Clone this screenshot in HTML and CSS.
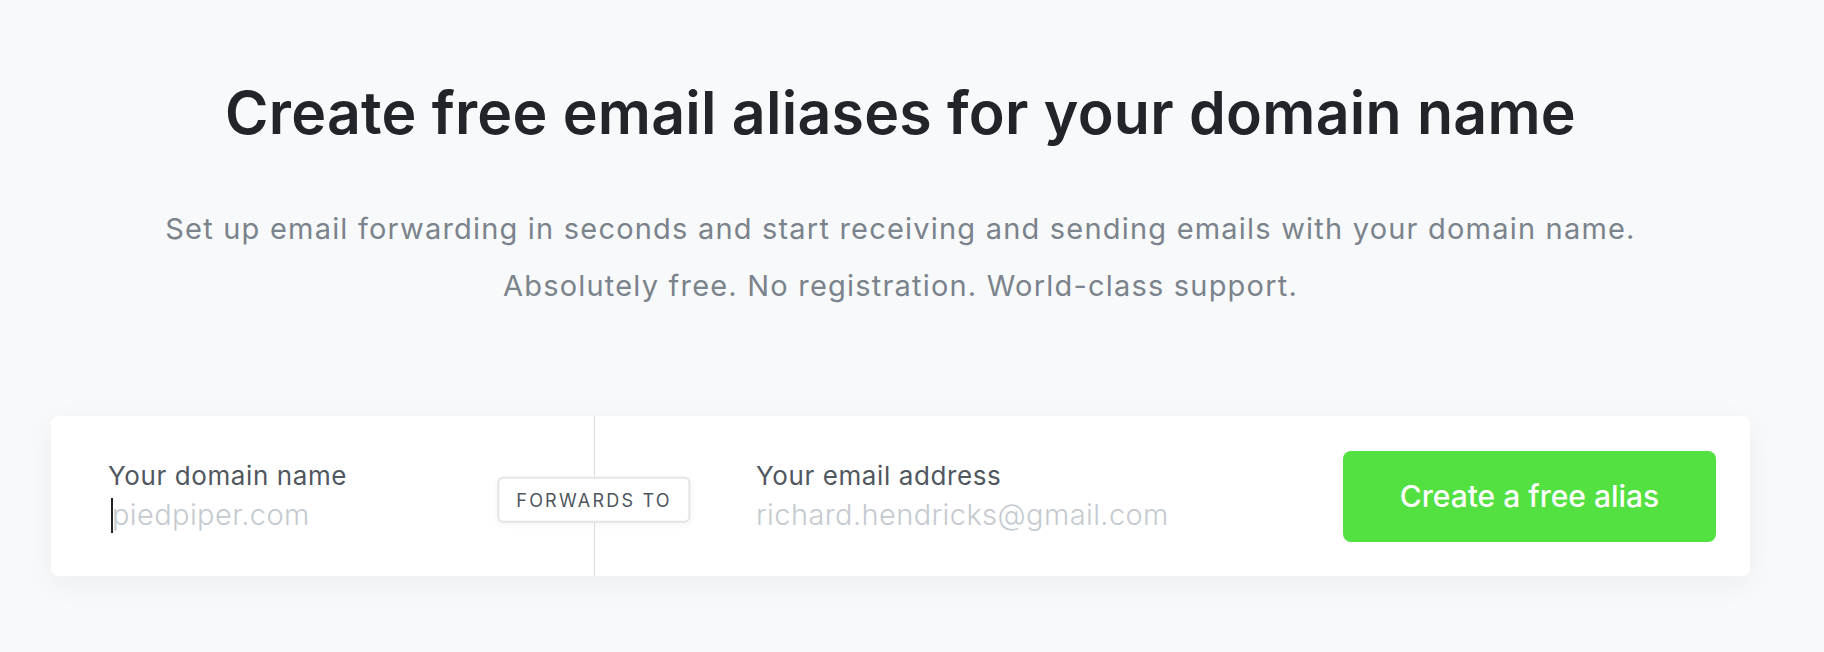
FILE: index.html
```html
<!DOCTYPE html>
<html lang="en">
<head>
    <meta charset="UTF-8">
    <meta name="viewport" content="width=device-width, initial-scale=1.0">
    <title>Free email aliases</title>
    <link rel="stylesheet" href="styles.css">
</head>
<body>
    <main class="hero">
        <!-- Title -->
        <h1 class="hero-title">Create free email aliases for your domain name</h1>
        <p class="hero-text">
            Set up email forwarding in seconds and start receiving and sending emails with your domain name.<br>
            Absolutely free. No registration. World-class support.
        </p>

        <!-- Alias form -->
        <form class="alias-form" onsubmit="return false">
            <div class="field field-domain">
                <label class="field-label" for="domain">Your domain name</label>
                <div class="field-input-wrap">
                    <span class="caret"></span>
                    <input id="domain" class="field-input" type="text" placeholder="piedpiper.com">
                </div>
                <span class="forwards-badge">FORWARDS TO</span>
            </div>
            <div class="field field-email">
                <label class="field-label" for="email">Your email address</label>
                <div class="field-input-wrap">
                    <input id="email" class="field-input" type="email" placeholder="richard.hendricks@gmail.com">
                </div>
            </div>
            <div class="form-action">
                <button class="alias-button" type="submit">Create a free alias</button>
            </div>
        </form>
    </main>
</body>
</html>
```

FILE: styles.css
```css
/* Reset */
* {
    margin: 0;
    padding: 0;
    box-sizing: border-box;
}

body {
    font-family: Inter, "Noto Sans", sans-serif;
    background-color: #f8f9fa;
    color: #212529;
    min-height: 100vh;
}

/* Hero */
.hero {
    width: 1801px;
    padding: 77px 51px 0;
    text-align: center;
}

.hero-title {
    font-size: 59px;
    line-height: 72px;
    font-weight: 600;
    letter-spacing: 0.25px;
    color: #212529;
}

.hero-text {
    margin-top: 51px;
    font-size: 29px;
    line-height: 57px;
    font-weight: 400;
    letter-spacing: 1.2px;
    color: #7b838c;
}

/* Alias form card */
.alias-form {
    display: flex;
    height: 160px;
    margin-top: 102px;
    background-color: #fff;
    border-radius: 8px;
    box-shadow: 0 8px 30px rgba(33, 37, 41, 0.05);
    text-align: left;
}

.field {
    display: flex;
    flex-direction: column;
    padding-top: 44px;
}

.field-domain {
    width: 544px;
    padding-left: 57px;
    border-right: 1px solid #dcdfe2;
    position: relative;
}

.field-email {
    flex: 1;
    padding-left: 161px;
}

.field-label {
    font-size: 26px;
    line-height: 32px;
    letter-spacing: 0.6px;
    color: #50575f;
}

.field-input-wrap {
    position: relative;
    margin-top: 5px;
}

.field-input {
    width: 100%;
    border: none;
    outline: none;
    background: transparent;
    font-family: inherit;
    font-size: 29px;
    line-height: 36px;
    font-weight: 300;
    letter-spacing: 0.4px;
    color: #212529;
}

.field-domain .field-input {
    padding-left: 4px;
}

.field-input::placeholder {
    color: #c5cad0;
}

.caret {
    position: absolute;
    left: 3px;
    top: 1px;
    width: 2px;
    height: 35px;
    background-color: #212529;
}

/* Badge sitting on the divider */
.forwards-badge {
    position: absolute;
    left: 100%;
    top: 50%;
    transform: translate(-50%, -42%);
    padding: 0 17px;
    height: 46px;
    line-height: 44px;
    font-size: 18px;
    letter-spacing: 2.2px;
    color: #4f565e;
    background-color: #fff;
    border: 2px solid #e2e5e8;
    border-radius: 6px;
    box-shadow: 0 2px 6px rgba(33, 37, 41, 0.05);
    white-space: nowrap;
}

/* Button */
.form-action {
    display: flex;
    align-items: center;
    padding: 0 34px;
}

.alias-button {
    width: 373px;
    height: 91px;
    border: none;
    border-radius: 8px;
    background-color: #52e141;
    color: #fff;
    font-family: inherit;
    font-size: 30px;
    font-weight: 500;
    cursor: pointer;
}

.alias-button:hover {
    background-color: #45d034;
}
```
